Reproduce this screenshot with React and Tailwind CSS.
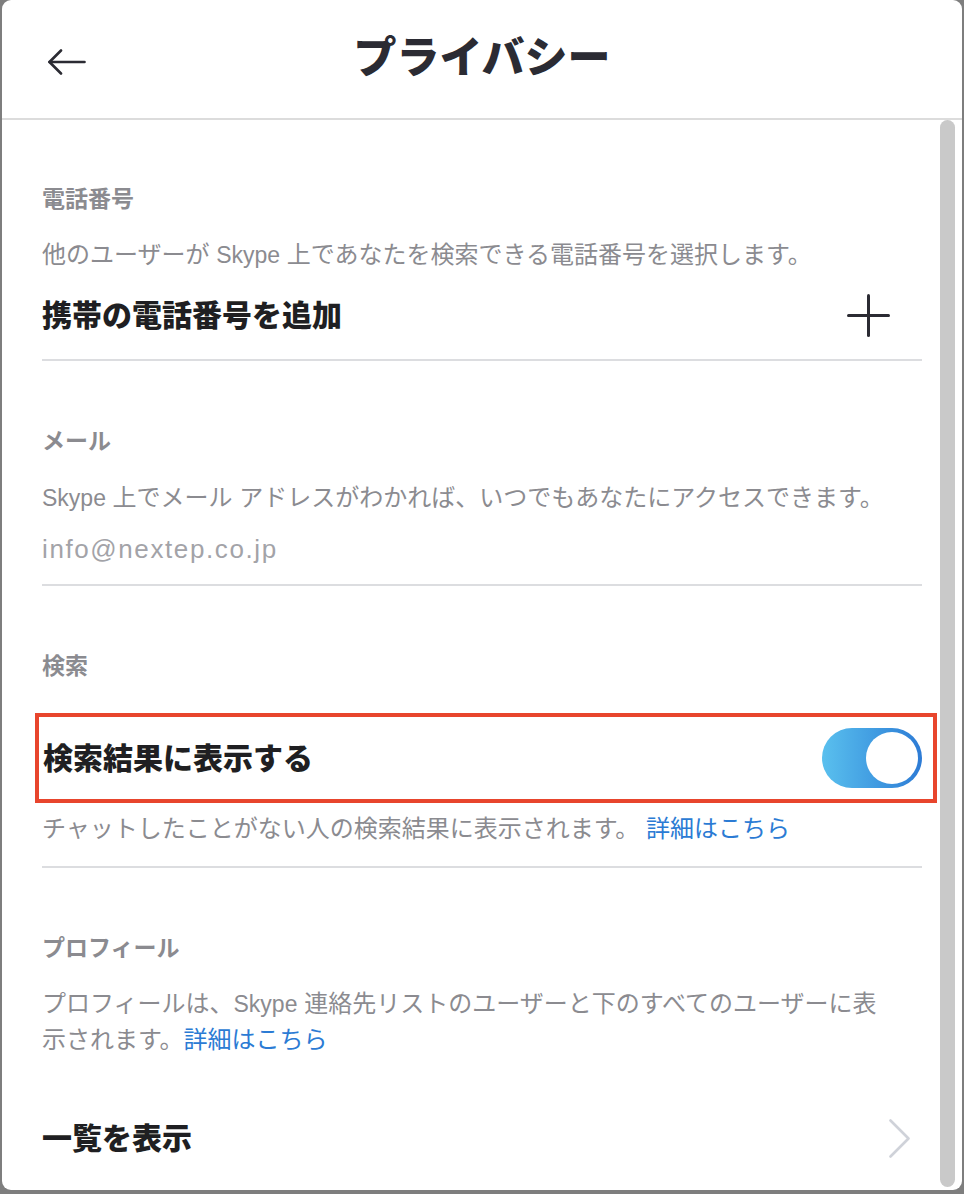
import React from "react";

const Divider = () => <div className="h-[2px] bg-[#dcdde0]" />;

const Label = ({ children }) => (
  <div className="h-[32px] text-[23px] leading-[32px] font-bold text-[#8b8b90]">
    {children}
  </div>
);

const App = () => {
  return (
    <div className="w-[964px] h-[1194px] bg-[#7e7e7e] px-[2px] pb-[4px] font-['Liberation_Sans','Noto_Sans_CJK_JP',sans-serif]">
      <div className="h-[1190px] bg-white rounded-[9px] overflow-hidden flex flex-col">
        {/* Header */}
        <div className="h-[120px] shrink-0 border-b-2 border-[#dcdcdc] grid grid-cols-[1fr_auto_1fr] items-center">
          <div className="pl-[46px] pt-[6px]">
            <svg width="38" height="26" viewBox="0 0 38 26" fill="none" stroke="#2b2b33" strokeWidth="2.6" strokeLinecap="round" strokeLinejoin="round">
              <path d="M13 1.5 L1.5 13 L13 24.5" />
              <path d="M1.5 13 H36.5" />
            </svg>
          </div>
          <h1 className="pb-[2px] text-[43px] leading-[52px] font-black text-[#2b2b33]">
            プライバシー
          </h1>
          <div />
        </div>

        {/* Body */}
        <div className="flex flex-1 min-h-0">
          <div className="ml-[40px] w-[880px]">
            {/* Phone */}
            <div className="pt-[63px]">
              <Label>電話番号</Label>
              <p className="mt-[22px] h-[35px] overflow-hidden text-[24px] leading-[35px] text-[#8b8b90]">
                他のユーザーが <span className="text-[23px]">Skype</span> 上であなたを検索できる電話番号を選択します。
              </p>
              <div className="h-[87px] flex items-center justify-between">
                <span className="text-[30px] font-black text-[#1f1f22]">携帯の電話番号を追加</span>
                <svg className="mr-[32px]" width="43" height="43" viewBox="0 0 43 43" stroke="#2b2b33" strokeWidth="3" strokeLinecap="round">
                  <path d="M21.5 1.5 V41.5" />
                  <path d="M1.5 21.5 H41.5" />
                </svg>
              </div>
              <Divider />
            </div>

            {/* Email */}
            <div className="pt-[64px]">
              <Label>メール</Label>
              <p className="mt-[23px] h-[35px] overflow-hidden text-[24px] leading-[35px] text-[#8b8b90]">
                <span className="text-[23px]">Skype</span> 上でメール アドレスがわかれば、いつでもあなたにアクセスできます。
              </p>
              <div className="mt-[14px] mb-[15px] h-[40px] text-[26px] leading-[40px] tracking-[1.6px] text-[#a3a3a8]">
                info@nextep.co.jp
              </div>
              <Divider />
            </div>

            {/* Search */}
            <div className="pt-[64px]">
              <Label>検索</Label>
              <div className="mt-[31px] -ml-[7px] -mr-[15px] h-[90px] border-4 border-[#e8452d] flex items-center justify-between pl-[4px] pr-[11px]">
                <span className="text-[30px] font-black text-[#1f1f22]">検索結果に表示する</span>
                <div className="w-[100px] h-[60px] rounded-full bg-linear-to-r from-[#5ac0ee] to-[#2d7bd5] flex items-center justify-end pr-[4px]">
                  <div className="w-[52px] h-[52px] rounded-full bg-white" />
                </div>
              </div>
              <p className="mt-[8px] h-[35px] overflow-hidden text-[24px] leading-[35px] text-[#8b8b90]">
                チャットしたことがない人の検索結果に表示されます。 <span className="text-[#2b7bd4]">詳細はこちら</span>
              </p>
              <div className="mt-[20px]">
                <Divider />
              </div>
            </div>

            {/* Profile */}
            <div className="pt-[64px]">
              <Label>プロフィール</Label>
              <p className="mt-[22px] h-[70px] overflow-hidden text-[24px] leading-[35px] text-[#8b8b90]">
                プロフィールは、<span className="text-[23px]">Skype</span> 連絡先リストのユーザーと下のすべてのユーザーに表
                <br />
                示されます。<span className="text-[#2b7bd4]">詳細はこちら</span>
              </p>
              <div className="mt-[44px] h-[76px] flex items-center justify-between">
                <span className="text-[30px] font-black text-[#1f1f22]">一覧を表示</span>
                <svg className="mr-[12px]" width="21" height="39" viewBox="0 0 21 39" fill="none" stroke="#cfd2d9" strokeWidth="2.6" strokeLinecap="round" strokeLinejoin="round">
                  <path d="M1.5 1.5 L19.5 19.5 L1.5 37.5" />
                </svg>
              </div>
            </div>
          </div>

          {/* Scrollbar */}
          <div className="ml-[18px] w-[15px] mb-[3px] rounded-full bg-[#c9c9c9]" />
        </div>
      </div>
    </div>
  );
};

export default App;
